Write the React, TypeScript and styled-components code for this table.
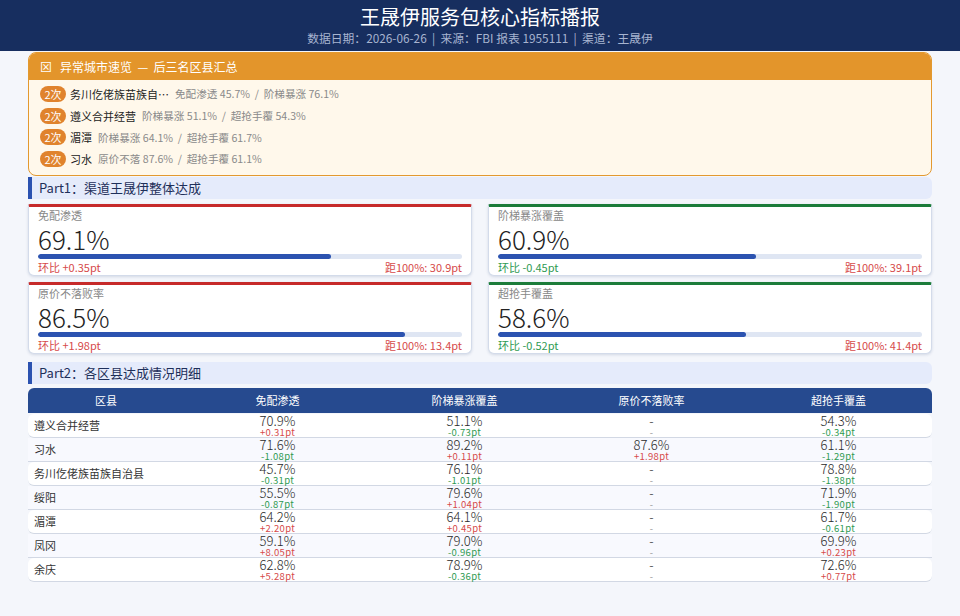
import React from 'react';
import styled, { createGlobalStyle } from 'styled-components';

const GlobalStyle = createGlobalStyle`
  html, body {
    margin: 0;
    padding: 0;
    background: #f4f6fb;
    font-family: "Noto Sans CJK SC", "Noto Sans", sans-serif;
    color: #222;
  }
`;

const RED = '#d64a4a';
const GREEN = '#2f9a52';

const Header = styled.header`
  height: 51px;
  background: #172e5f;
  display: flex;
  flex-direction: column;
  align-items: center;
  justify-content: center;
`;

const Title = styled.div`
  color: #fff;
  font-size: 20px;
  line-height: 24px;
`;

const Subtitle = styled.div`
  color: #a7b4d0;
  font-size: 11.8px;
  line-height: 16px;
  margin-top: 1px;
  white-space: pre;
`;

const Main = styled.main`
  padding: 1px 28px 0;
  display: flex;
  flex-direction: column;
`;

const AlertBox = styled.section`
  border: 1px solid #e3992f;
  border-radius: 8px;
  background: #fff8eb;
  overflow: hidden;
`;

const AlertHead = styled.div`
  height: 27px;
  background: #e3952b;
  color: #fff;
  font-size: 12px;
  display: flex;
  align-items: center;
  padding-left: 11px;
  gap: 8px;
  white-space: pre;
`;

const AlertBody = styled.div`
  padding: 3px 11px 5px;
  display: flex;
  flex-direction: column;
`;

const AlertRow = styled.div`
  height: 21.7px;
  display: flex;
  align-items: center;
  gap: 4px;
  font-size: 10.6px;
  color: #8a8a8a;
`;

const Badge = styled.span`
  width: 26px;
  height: 16px;
  border-radius: 8px;
  background: #e0832d;
  color: #fff;
  font-size: 11px;
  line-height: 16px;
  text-align: center;
`;

const AlertName = styled.span`
  font-size: 11px;
  color: #222;
  margin-right: 2px;
`;

const AlertText = styled.span`
  white-space: pre;
`;

const SectionHead = styled.div<{ $mt: number }>`
  margin-top: ${(p) => p.$mt}px;
  height: 22px;
  background: #e5ebfb;
  border-left: 4px solid #2b52b0;
  border-radius: 0 6px 6px 0;
  display: flex;
  align-items: center;
  padding-left: 7px;
  font-size: 13px;
  color: #1e2f5a;
`;

const CardGrid = styled.div`
  display: grid;
  grid-template-columns: 1fr 1fr;
  column-gap: 16px;
  row-gap: 6px;
  margin-top: 5px;
`;

const Card = styled.div<{ $accent: string }>`
  height: 72px;
  box-sizing: border-box;
  background: #fff;
  border: 1px solid #d3dbea;
  border-top: 3px solid ${(p) => p.$accent};
  border-radius: 2px 2px 6px 6px;
  box-shadow: 0 1px 3px rgba(40, 60, 110, 0.16);
  padding: 0 9px;
  display: flex;
  flex-direction: column;
`;

const CardLabel = styled.div`
  font-size: 11px;
  line-height: 14px;
  color: #888;
  margin-top: 1px;
`;

const CardValue = styled.div`
  font-size: 26px;
  line-height: 30px;
  font-weight: 300;
  color: #222;
  margin-top: 2px;
`;

const Track = styled.div`
  height: 5px;
  border-radius: 3px;
  background: #dfe6f3;
  overflow: hidden;
`;

const Fill = styled.div`
  height: 100%;
  background: #2c53b0;
  border-radius: 3px;
`;

const CardFoot = styled.div`
  display: flex;
  justify-content: space-between;
  font-size: 11px;
  line-height: 16px;
`;

const Delta = styled.span<{ $up: boolean }>`
  color: ${(p) => (p.$up ? RED : GREEN)};
`;

const Gap = styled.span`
  color: ${RED};
`;

const Table = styled.div`
  margin-top: 4px;
  display: flex;
  flex-direction: column;
`;

const HeadRow = styled.div`
  display: grid;
  grid-template-columns: 156px repeat(4, 1fr);
  height: 25px;
  align-items: center;
  background: #264a8f;
  border-radius: 6px 6px 0 0;
  color: #fff;
  font-size: 11px;
  text-align: center;
  margin-bottom: 1px;
`;

const BodyRow = styled.div<{ $odd: boolean }>`
  display: grid;
  grid-template-columns: 156px repeat(4, 1fr);
  height: 24px;
  box-sizing: border-box;
  align-items: center;
  background: ${(p) => (p.$odd ? '#fff' : '#f8f9fe')};
  border-radius: ${(p) => (p.$odd ? '6px' : '0')};
  border-bottom: 1px solid #d2d8e4;
`;

const NameCell = styled.div`
  font-size: 11px;
  color: #333;
  padding-left: 6px;
`;

const ValCell = styled.div`
  display: flex;
  flex-direction: column;
  align-items: center;
`;

const Val = styled.span`
  font-size: 13px;
  line-height: 13px;
  font-weight: 300;
  color: #2a2a2a;
`;

const Sub = styled.span<{ $color: string }>`
  font-size: 9.5px;
  line-height: 10px;
  letter-spacing: 0.3px;
  color: ${(p) => p.$color};
`;

const alerts = [
  { name: '务川仡佬族苗族自…', text: '免配渗透 45.7%  /  阶梯暴涨 76.1%' },
  { name: '遵义合并经营', text: '阶梯暴涨 51.1%  /  超抢手覆 54.3%' },
  { name: '湄潭', text: '阶梯暴涨 64.1%  /  超抢手覆 61.7%' },
  { name: '习水', text: '原价不落 87.6%  /  超抢手覆 61.1%' },
];

const cards = [
  { label: '免配渗透', value: 69.1, delta: '+0.35pt', up: true, gap: '30.9pt', accent: '#c62a2a' },
  { label: '阶梯暴涨覆盖', value: 60.9, delta: '-0.45pt', up: false, gap: '39.1pt', accent: '#1c7c3a' },
  { label: '原价不落败率', value: 86.5, delta: '+1.98pt', up: true, gap: '13.4pt', accent: '#c62a2a' },
  { label: '超抢手覆盖', value: 58.6, delta: '-0.52pt', up: false, gap: '41.4pt', accent: '#1c7c3a' },
];

type Cell = [string, string] | null;

const rows: { name: string; cells: Cell[] }[] = [
  { name: '遵义合并经营', cells: [['70.9%', '+0.31pt'], ['51.1%', '-0.73pt'], null, ['54.3%', '-0.34pt']] },
  { name: '习水', cells: [['71.6%', '-1.08pt'], ['89.2%', '+0.11pt'], ['87.6%', '+1.98pt'], ['61.1%', '-1.29pt']] },
  { name: '务川仡佬族苗族自治县', cells: [['45.7%', '-0.31pt'], ['76.1%', '-1.01pt'], null, ['78.8%', '-1.38pt']] },
  { name: '绥阳', cells: [['55.5%', '-0.87pt'], ['79.6%', '+1.04pt'], null, ['71.9%', '-1.90pt']] },
  { name: '湄潭', cells: [['64.2%', '+2.20pt'], ['64.1%', '+0.45pt'], null, ['61.7%', '-0.61pt']] },
  { name: '凤冈', cells: [['59.1%', '+8.05pt'], ['79.0%', '-0.96pt'], null, ['69.9%', '+0.23pt']] },
  { name: '余庆', cells: [['62.8%', '+5.28pt'], ['78.9%', '-0.36pt'], null, ['72.6%', '+0.77pt']] },
];

const App = () => (
  <>
    <GlobalStyle />
    <Header>
      <Title>王晟伊服务包核心指标播报</Title>
      <Subtitle>数据日期：2026-06-26  |  来源：FBI 报表 1955111  |  渠道：王晟伊</Subtitle>
    </Header>
    <Main>
      <AlertBox>
        <AlertHead>
          <span>⊠</span>
          <span>异常城市速览  —  后三名区县汇总</span>
        </AlertHead>
        <AlertBody>
          {alerts.map((a) => (
            <AlertRow key={a.name}>
              <Badge>2次</Badge>
              <AlertName>{a.name}</AlertName>
              <AlertText>{a.text}</AlertText>
            </AlertRow>
          ))}
        </AlertBody>
      </AlertBox>

      <SectionHead $mt={1}>Part1：渠道王晟伊整体达成</SectionHead>
      <CardGrid>
        {cards.map((c) => (
          <Card key={c.label} $accent={c.accent}>
            <CardLabel>{c.label}</CardLabel>
            <CardValue>{c.value}%</CardValue>
            <Track>
              <Fill style={{ width: `${c.value}%` }} />
            </Track>
            <CardFoot>
              <Delta $up={c.up}>环比 {c.delta}</Delta>
              <Gap>距100%: {c.gap}</Gap>
            </CardFoot>
          </Card>
        ))}
      </CardGrid>

      <SectionHead $mt={8}>Part2：各区县达成情况明细</SectionHead>
      <Table>
        <HeadRow>
          <span>区县</span>
          <span>免配渗透</span>
          <span>阶梯暴涨覆盖</span>
          <span>原价不落败率</span>
          <span>超抢手覆盖</span>
        </HeadRow>
        {rows.map((r, i) => (
          <BodyRow key={r.name} $odd={i % 2 === 0}>
            <NameCell>{r.name}</NameCell>
            {r.cells.map((c, j) => (
              <ValCell key={j}>
                <Val>{c ? c[0] : '-'}</Val>
                <Sub $color={c ? (c[1].startsWith('+') ? RED : GREEN) : '#999'}>{c ? c[1] : '-'}</Sub>
              </ValCell>
            ))}
          </BodyRow>
        ))}
      </Table>
    </Main>
  </>
);

export default App;
